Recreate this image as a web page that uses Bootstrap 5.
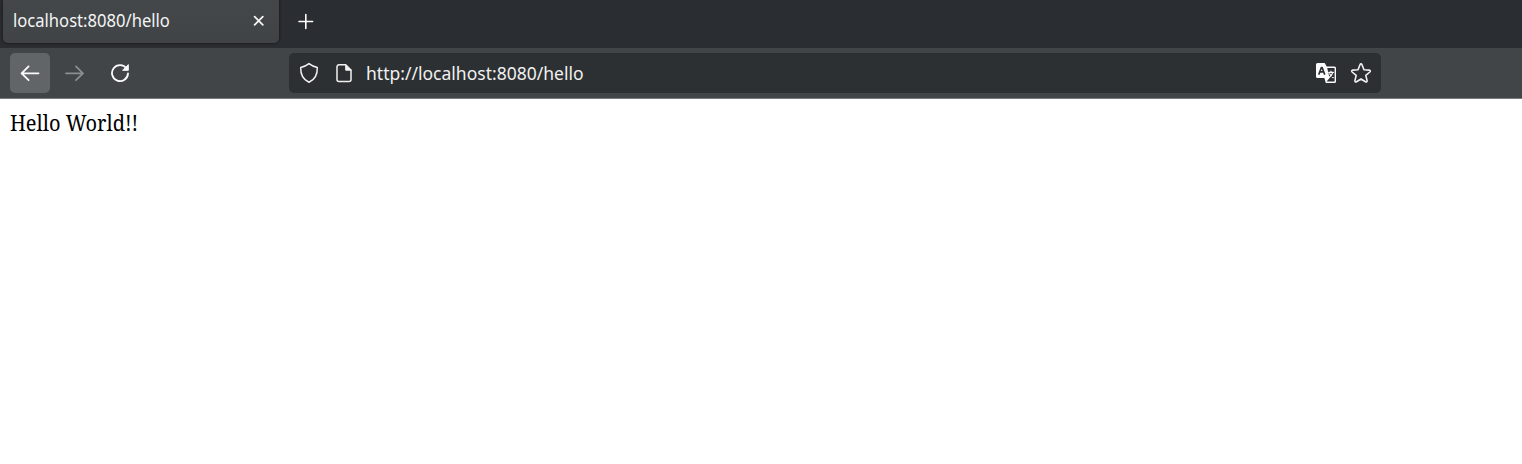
<!DOCTYPE html>
<html lang="en">
<head>
<meta charset="utf-8">
<meta name="viewport" content="width=device-width, initial-scale=1">
<title>localhost:8080/hello</title>
<link href="https://cdn.jsdelivr.net/npm/bootstrap@5.3.0/dist/css/bootstrap.min.css" rel="stylesheet">
<style>
body{font-family:"Noto Sans",sans-serif;background:#fff;overflow:hidden}
.tabstrip{height:48px;background:#2a2d31;padding-left:3px}
.browser-tab{width:276px;height:43px;background:linear-gradient(#434749,#404446);border-radius:0 0 5px 5px;box-shadow:0 0 3px rgba(0,0,0,.65);padding:0 13px 1px 10px;color:#f4f5f5;font-size:17.3px}
.condensed{display:inline-block;white-space:nowrap;transform-origin:0 50%}
.tab-title{transform:scaleX(.96)}
.new-tab{margin-top:11px}
.toolbar-row{height:51px;background:#414547;border-bottom:1px solid #77797a;padding-left:10px}
.tool{width:40px;height:40px;border-radius:5px;border:0;padding:0;background:none;color:#fbfbfb}
.tool.active-tool{background:#626568}
.tool.dim{color:#8b8e8f}
.address{width:1092px;height:40px;margin-left:151px;border-radius:5px;background:#2c3032;color:#f1f1f1;padding:0 9px 0 10px;font-size:18px}
.url{margin-left:13px}
.url .condensed{transform:scaleX(.973)}
.star{margin-left:13px}
svg{display:block;flex:none;fill:none;stroke:currentColor;stroke-linecap:round;stroke-linejoin:round}
.page-text{font-family:"Noto Serif",serif;font-size:21.33px;line-height:30px;color:#000;padding:9px 10px}
.page-text .condensed{transform:scaleX(.938)}
</style>
</head>
<body>
<header>
  <div class="tabstrip d-flex align-items-start">
    <div class="browser-tab d-flex align-items-center justify-content-between">
      <span class="tab-title condensed">localhost:8080/hello</span>
      <svg width="14" height="14" viewBox="0 0 14 14" stroke-width="1.8"><path d="M2.6 2.6l8.200 8.200M10.800 2.600l-8.200 8.200"/></svg>
    </div>
    <svg class="new-tab text-white ms-3" width="20" height="20" viewBox="0 0 20 20" stroke-width="1.6"><path d="M4 10.500h13.600M10.800 3.500v14"/></svg>
  </div>
  <nav class="toolbar-row d-flex align-items-center">
    <button class="tool active-tool d-flex align-items-center justify-content-center" aria-label="Back"><svg width="20" height="20" viewBox="0 0 20 20" stroke-width="1.8"><path d="M18.500 10.300h-17M8.600 3.400l-7 6.900 7 6.900"/></svg></button>
    <button class="tool dim d-flex align-items-center justify-content-center ms-1" aria-label="Forward"><svg width="20" height="20" viewBox="0 0 20 20" stroke-width="1.8"><path d="M2 10.300h17M12 3.400l7 6.900-7 6.900"/></svg></button>
    <button class="tool d-flex align-items-center justify-content-center ms-1 ps-1" aria-label="Reload"><svg width="20" height="20" viewBox="0 0 20 20" stroke-width="1.8"><path d="M16.600 5.600A8 8 0 1 0 18 10.400"/><path d="M18.300 2v5.300H13z" fill="currentColor" stroke-width="1"/></svg></button>
    <div class="address d-flex align-items-center">
      <svg width="20" height="22" viewBox="0 0 20 22" stroke-width="1.5"><path d="M10 1.600C7.500 3.500 4.700 4.900 1.700 5.500 1.500 11.800 3.800 17.500 10 20.300c6.200-2.800 8.500-8.500 8.300-14.800C15.300 4.900 12.500 3.500 10 1.600z"/></svg>
      <svg class="ms-3" width="18" height="20" viewBox="0 0 18 20" stroke-width="1.500"><path d="M10.500 1.800H4a2 2 0 0 0-2 2v12.600a2 2 0 0 0 2 2h10a2 2 0 0 0 2-2V7.200z"/><path d="M10.700 1.800v5.400H16z" fill="currentColor" stroke-width="1"/></svg>
      <span class="url flex-grow-1"><span class="condensed">http://localhost:8080/hello</span></span>
      <svg width="22" height="20" viewBox="0 0 22 20"><path d="M2.500 0h7.200l2 3.500h7.800A1.500 1.500 0 0 1 21 5v13.500a1.500 1.500 0 0 1-1.500 1.500h-8.700l-1.400-5H2.500A1.500 1.500 0 0 1 1 13.500v-12A1.500 1.500 0 0 1 2.500 0z" fill="#fbfbfb" stroke="none"/><path d="M12.200 5h7.400v13.500h-8l3-3.500z" fill="#2c3032" stroke="none"/><path d="M4 11l2.400-6.500h.7L9.500 11M5.200 8.800h3.200" stroke="#2c3032" stroke-width="1.700"/><path d="M13.700 9.300h4.800M16 8v1.300M17.700 9.600c-.5 2.300-1.700 3.800-3.700 5M14.700 10.700c.7 1.700 1.800 3 3.500 3.900" stroke="#fbfbfb" stroke-width="1.200"/></svg>
      <svg class="star" width="22" height="22" viewBox="0 0 22 22" stroke-width="1.600"><path d="M11 1.900c.5 0 .8.300 1 .8l2 5 5.300.4c1 .1 1.400 1.200.6 1.900L15.800 13.400l1.300 5.200c.2 1-.8 1.700-1.600 1.200L11 17l-4.500 2.800c-.8.500-1.800-.2-1.600-1.200l1.300-5.200L2.100 10c-.8-.7-.4-1.800.6-1.900L8 7.700l2-5c.2-.5.500-.8 1-.8z"/></svg>
    </div>
  </nav>
</header>
<main class="page-text"><span class="condensed">Hello World!!</span></main>
<script src="https://cdn.jsdelivr.net/npm/bootstrap@5.3.0/dist/js/bootstrap.bundle.min.js"></script>
</body>
</html>
